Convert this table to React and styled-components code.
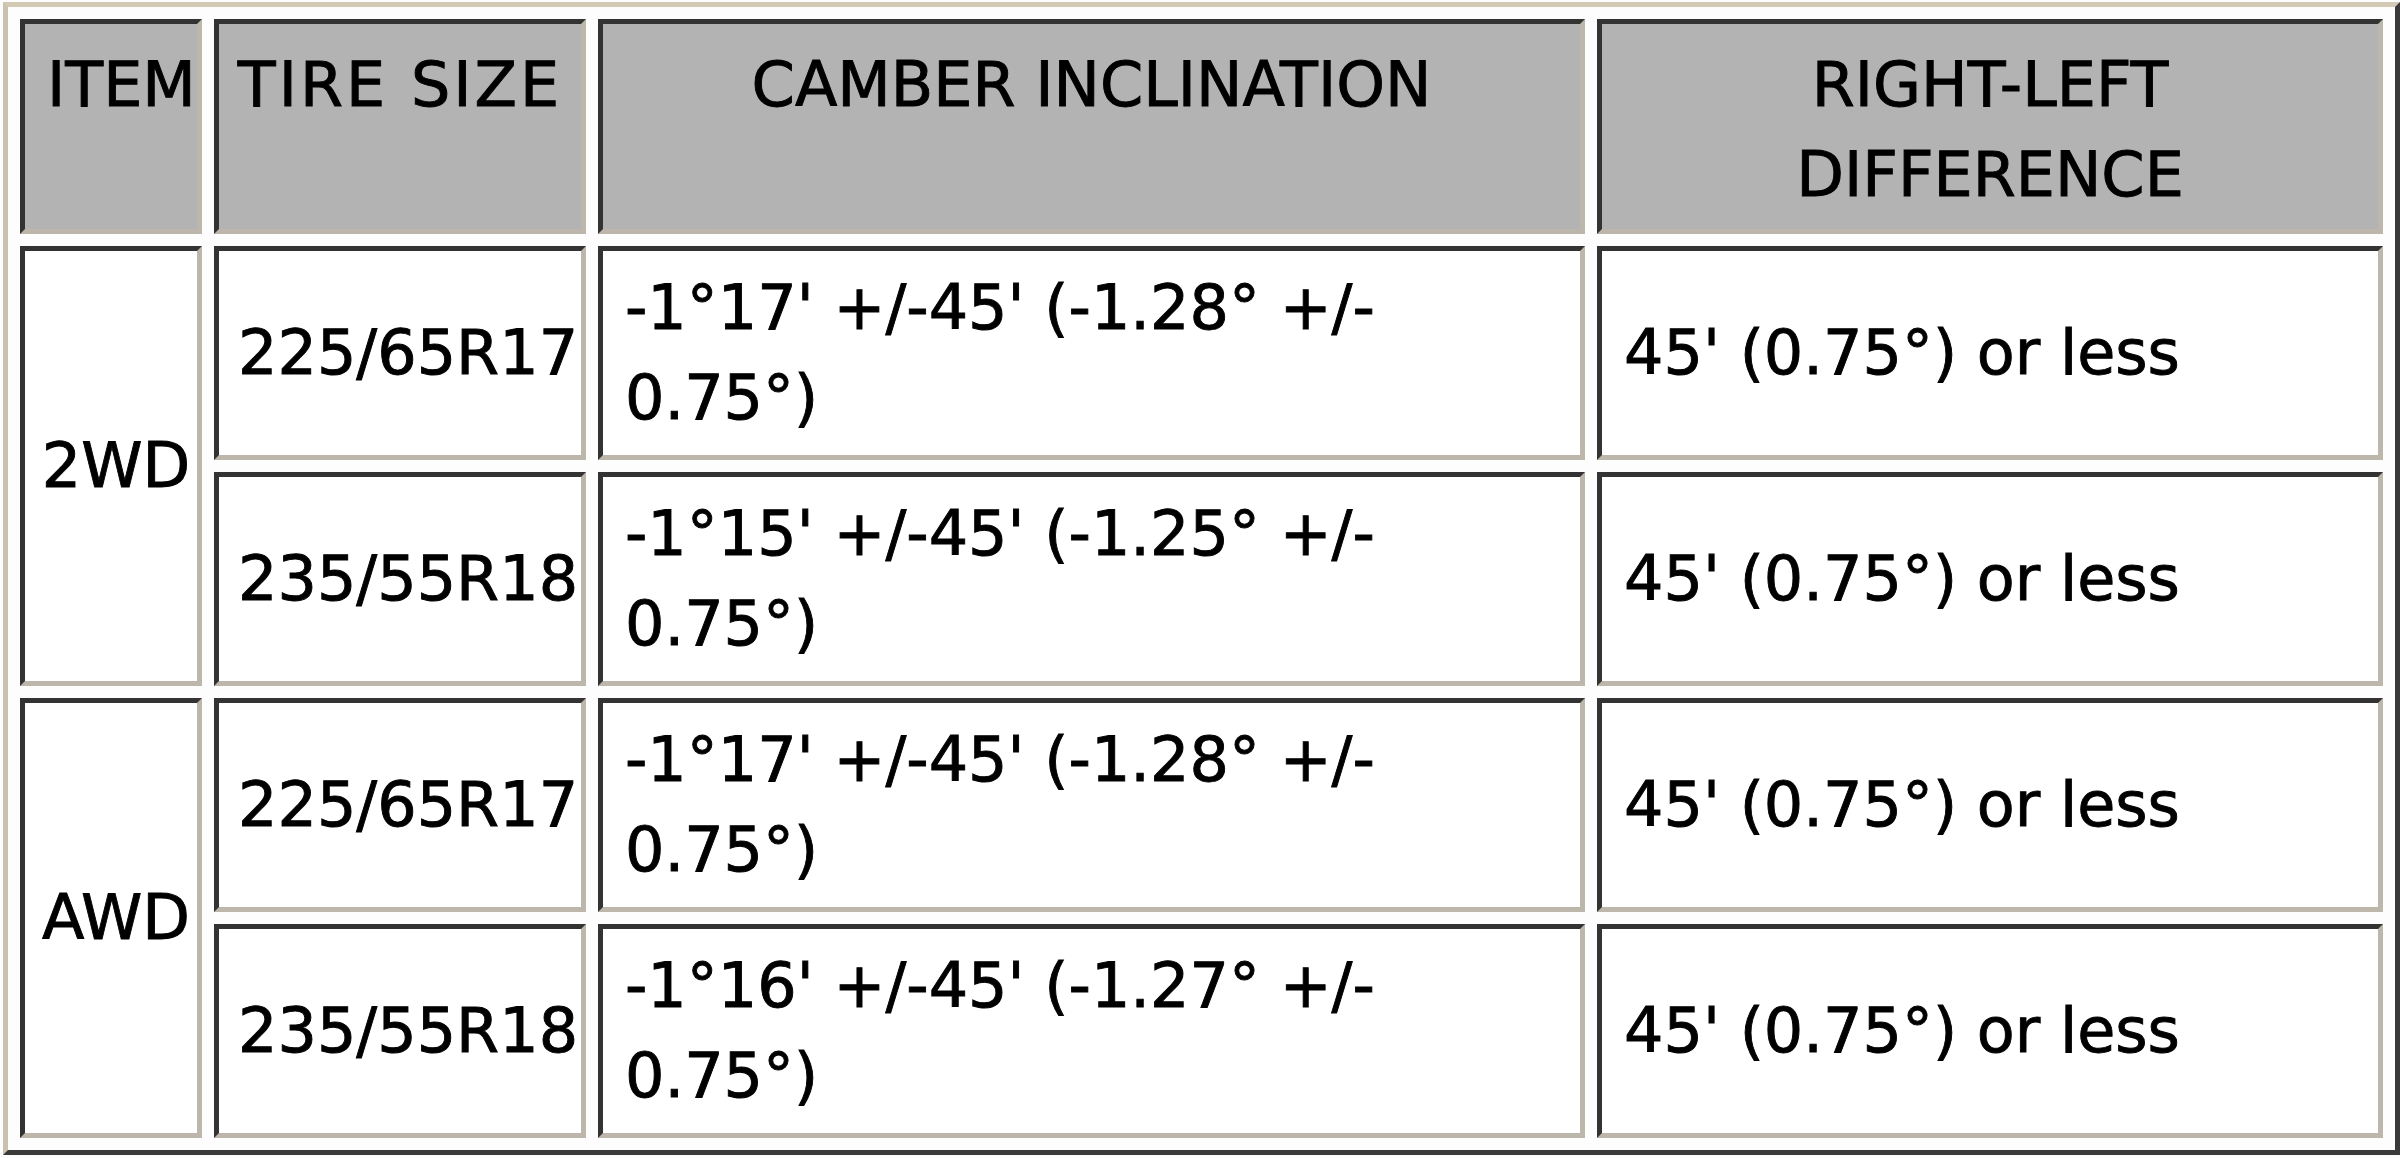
import React from "react";
import styled, { createGlobalStyle } from "styled-components";

const Global = createGlobalStyle`
  html, body {
    margin: 0;
    padding: 0;
    background: #fdfdfd;
  }
  body {
    font-family: "DejaVu Sans", Verdana, sans-serif;
    color: #000;
  }
`;

const Table = styled.table`
  margin: 2px 0 0 3px;
  width: 2397px;
  table-layout: fixed;
  border-collapse: separate;
  border-spacing: 12px;
  border-style: solid;
  border-width: 5px;
  border-color: #d3cab5 #3a3a3a #3a3a3a #cbc2ad;
  background: #fdfdfd;
  font-family: "DejaVu Sans", Verdana, sans-serif;
  font-size: 62px;
  line-height: 90px;
  -webkit-text-stroke: 0.9px #000;
`;

const Col = styled.col`
  width: ${(p) => p.$w}px;
`;

const cellBorder = `
  border-style: solid;
  border-width: 5px;
  border-color: #333 #bdb7ab #bdb7ab #333;
`;

const Th = styled.th`
  ${cellBorder}
  background: #b3b3b3;
  font-weight: normal;
  text-align: center;
  vertical-align: top;
  padding: 16px 10px 9px;
  padding-left: ${(p) => (p.$shift ? "22px" : "10px")};
  padding-right: ${(p) => (p.$shift ? "4px" : "10px")};
  letter-spacing: ${(p) => p.$ls || 0}px;
`;

const Td = styled.td`
  ${cellBorder}
  background: #fff;
  vertical-align: middle;
  text-align: ${(p) => (p.$center ? "center" : "left")};
  padding: ${(p) =>
    p.$center ? "12px 4px 12px 14px" : p.$size ? "12px 0 12px 19px" : "12px 20px 12px 22px"};
  white-space: ${(p) => (p.$size ? "nowrap" : "normal")};
`;

const rows = [
  { group: "2WD", size: "225/65R17", camber: "-1°17' +/-45' (-1.28° +/- 0.75°)" },
  { size: "235/55R18", camber: "-1°15' +/-45' (-1.25° +/- 0.75°)" },
  { group: "AWD", size: "225/65R17", camber: "-1°17' +/-45' (-1.28° +/- 0.75°)" },
  { size: "235/55R18", camber: "-1°16' +/-45' (-1.27° +/- 0.75°)" },
];

export default function App() {
  return (
    <>
      <Global />
      <Table>
        <colgroup>
          <Col $w={182} />
          <Col $w={372} />
          <Col $w={987} />
          <Col $w={786} />
        </colgroup>
        <thead>
          <tr>
            <Th $shift>ITEM</Th>
            <Th $ls={3}>TIRE SIZE</Th>
            <Th>CAMBER INCLINATION</Th>
            <Th>
              RIGHT-LEFT
              <br />
              DIFFERENCE
            </Th>
          </tr>
        </thead>
        <tbody>
          {rows.map((r, i) => (
            <tr key={i}>
              {r.group && (
                <Td rowSpan={2} $center>
                  {r.group}
                </Td>
              )}
              <Td $size>{r.size}</Td>
              <Td>{r.camber}</Td>
              <Td>45' (0.75°) or less</Td>
            </tr>
          ))}
        </tbody>
      </Table>
    </>
  );
}
